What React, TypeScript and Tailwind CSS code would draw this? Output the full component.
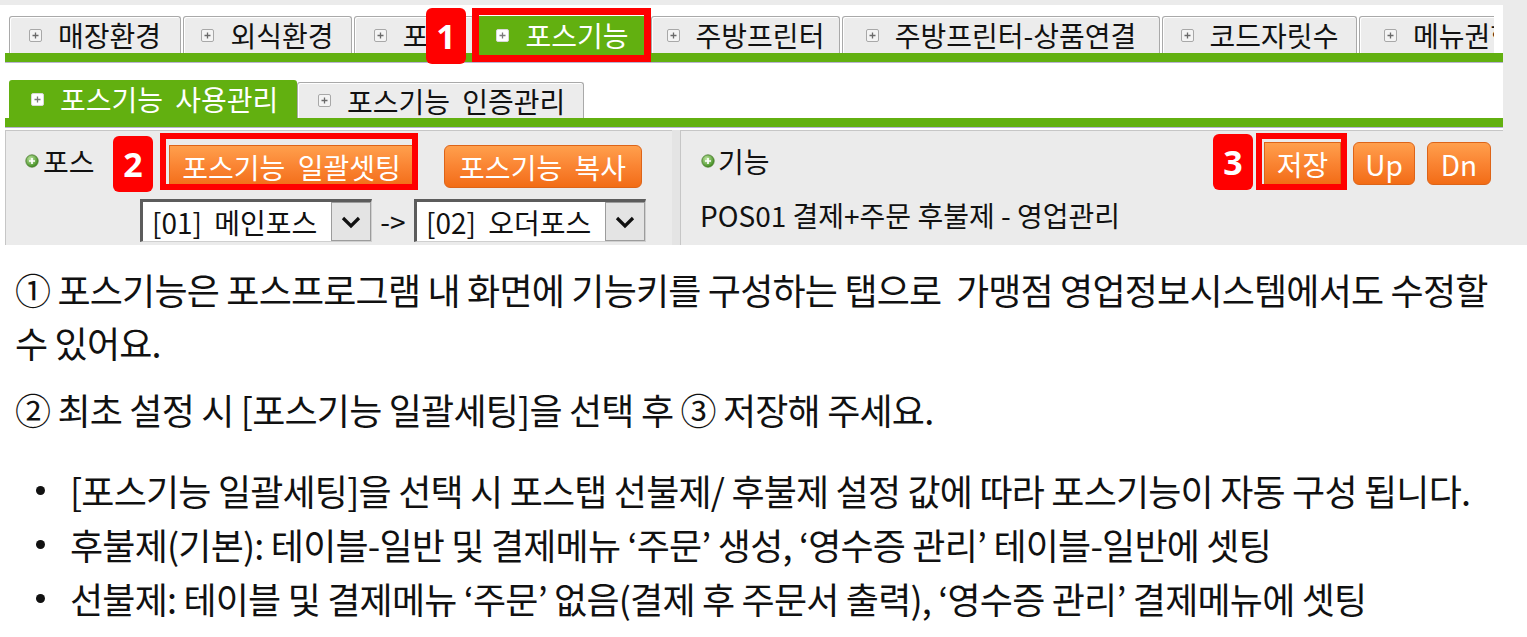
import React from "react";

const plusSquare = (active?: boolean) => (
  <svg width="13" height="13" viewBox="0 0 13 13" className="shrink-0">
    <rect x="0.5" y="0.5" width="12" height="12" rx="1.5" fill={active ? "#ffffff" : "#f4f4f4"} stroke={active ? "#d8d8d8" : "#a8a8a8"} />
    <path d="M6.5 3.5v6M3.5 6.5h6" stroke={active ? "#7a7a7a" : "#6a6a6a"} strokeWidth="1.3" />
  </svg>
);

const greenDot = (
  <svg width="14" height="14" viewBox="0 0 14 14" className="shrink-0">
    <defs>
      <radialGradient id="gd" cx="40%" cy="35%" r="65%">
        <stop offset="0" stopColor="#c4eaa8" />
        <stop offset="1" stopColor="#3d8a1c" />
      </radialGradient>
    </defs>
    <circle cx="7" cy="7" r="6.2" fill="url(#gd)" stroke="#4f7d34" strokeWidth="0.8" />
    <path d="M7 4v6M4 7h6" stroke="#fff" strokeWidth="1.7" />
  </svg>
);

function Tab({ label, w, active, left }: { label: string; w: number; active?: boolean; left?: boolean }) {
  return (
    <div
      style={{ width: w }}
      className={`h-full shrink-0 flex items-center gap-[16px] rounded-t-[3px] border border-b-0 ${left ? "justify-start pl-[24px]" : "justify-center"} ${
        active ? "bg-[#62b010] border-[#62b010] text-white" : "bg-[#ececec] border-[#a9a9a9] text-[#111] shadow-[inset_1px_1px_0_#ffffff]"
      }`}
    >
      {plusSquare(active)}
      <span className="whitespace-nowrap">{label}</span>
    </div>
  );
}

function Badge({ n, cls }: { n: string; cls: string }) {
  return (
    <div className={`absolute w-[40px] h-[56px] bg-[#ff0000] rounded-[6px] flex items-center justify-center text-white text-[34px] font-bold font-['Noto_Sans',sans-serif] ${cls}`}>
      {n}
    </div>
  );
}

function OrangeBtn({ label, w, rounded }: { label: string; w: number; rounded?: boolean }) {
  return (
    <div
      style={{ width: w }}
      className={`h-[43px] shrink-0 flex items-center justify-center text-white whitespace-nowrap bg-linear-to-b from-[#ff9f4c] via-[#fa8432] to-[#f26c14] border border-[#dd6418] ${rounded ? "rounded-[6px]" : ""}`}
    >
      {label}
    </div>
  );
}

function Select({ label }: { label: string }) {
  return (
    <div className="flex h-[43px] w-[232px] bg-white border-t-[3px] border-l-[3px] border-t-[#5c5c5c] border-l-[#5c5c5c] border-r border-b border-r-[#cfcfcf] border-b-[#cfcfcf]">
      <span className="pl-[9px] flex items-center whitespace-nowrap">{label}</span>
      <div className="ml-auto w-[40px] bg-[#e4e4e4] border border-[#9c9c9c] flex items-center justify-center">
        <svg width="22" height="14" viewBox="0 0 22 14">
          <polyline points="3,3 11,11 19,3" fill="none" stroke="#111" strokeWidth="3.2" />
        </svg>
      </div>
    </div>
  );
}

export default function App() {
  return (
    <div className="w-[1527px] h-[637px] bg-white overflow-hidden">
      {/* captured admin screen */}
      <div className="relative h-[245px] bg-[#ebebeb] pt-[5px] pr-[24px] text-[28px] leading-none [word-spacing:6px] font-['Noto_Sans_CJK_KR',sans-serif]">
        <div className="h-full bg-white flex flex-col">
          <div className="h-[11px]" />
          <div className="flex h-[37px] w-[1494px] pl-[9px] gap-[2px] overflow-x-clip">
            <Tab label="매장환경" w={172} />
            <Tab label="외식환경" w={169} />
            <Tab label="포스" w={120} />
            <Tab label="포스기능" w={173} active />
            <Tab label="주방프린터" w={189} />
            <Tab label="주방프린터-상품연결" w={318} />
            <Tab label="코드자릿수" w={195} />
            <Tab label="메뉴권한" w={180} left />
          </div>
          <div className="ml-[5px] h-[10px] bg-[#62b010] border-b border-[#b9b3d3]" />
          <div className="h-[17px]" />
          <div className="flex h-[38px] pl-[9px] items-end">
            <div className="h-[38px] w-[288px] rounded-t-[3px] bg-[#62b010] text-white flex items-center gap-[16px] pl-[22px]">
              {plusSquare(true)}
              <span className="whitespace-nowrap">포스기능 사용관리</span>
            </div>
            <div className="h-[36px] w-[287px] rounded-t-[3px] bg-[#ececec] border border-b-0 border-[#a9a9a9] text-[#111] flex items-center gap-[16px] pl-[20px] shadow-[inset_1px_1px_0_#ffffff]">
              {plusSquare()}
              <span className="whitespace-nowrap">포스기능 인증관리</span>
            </div>
          </div>
          <div className="ml-[5px] h-[10px] bg-[#62b010] border-b border-[#b9b3d3]" />
          <div className="h-[2px]" />
          <div className="flex-1 ml-[5px] bg-[#e4e4e4] flex gap-[8px] text-[#111]">
            <div className="w-[667px] bg-[#ebebeb] border-t border-l border-[#c6c6c6] pt-[14px] flex flex-col">
              <div className="flex items-start">
                <div className="flex items-center gap-[4px] pl-[19px] pt-[2px] leading-[28px]">
                  {greenDot}
                  <span>포스</span>
                </div>
                <div className="ml-[74px] flex gap-[29px]">
                  <OrangeBtn label="포스기능 일괄셋팅" w={246} />
                  <OrangeBtn label="포스기능 복사" w={198} rounded />
                </div>
              </div>
              <div className="flex items-center mt-[11px] pl-[134px]">
                <Select label="[01] 메인포스" />
                <span className="w-[42px] text-center">-&gt;</span>
                <Select label="[02] 오더포스" />
              </div>
            </div>
            <div className="flex-1 bg-[#ebebeb] border-t border-l border-[#c6c6c6] pt-[11px] pr-[12px] flex flex-col">
              <div className="flex items-start justify-between">
                <div className="flex items-center gap-[3px] pl-[20px] pt-[5px] leading-[28px]">
                  {greenDot}
                  <span>기능</span>
                </div>
                <div className="flex gap-[12px]">
                  <OrangeBtn label="저장" w={77} />
                  <OrangeBtn label="Up" w={62} rounded />
                  <OrangeBtn label="Dn" w={64} rounded />
                </div>
              </div>
              <div className="pl-[19px] mt-[16px] whitespace-nowrap [word-spacing:0px]">POS01 결제+주문 후불제 - 영업관리</div>
            </div>
          </div>
        </div>

        {/* highlights */}
        <div className="absolute left-[472px] top-[8px] w-[179px] h-[54px] border-[7px] border-[#ff0000]" />
        <div className="absolute left-[160px] top-[133px] w-[258px] h-[57px] border-[6px] border-[#ff0000]" />
        <div className="absolute left-[1256px] top-[133px] w-[91px] h-[57px] border-[6px] border-[#ff0000]" />
        <Badge n="1" cls="left-[426px] top-[8px] h-[55px]" />
        <Badge n="2" cls="left-[113px] top-[136px]" />
        <Badge n="3" cls="left-[1213px] top-[134px]" />
      </div>

      {/* description */}
      <div className="pl-[15px] pt-[18px] text-[36px] leading-[53px] tracking-[-0.8px] text-[#111] font-['Noto_Sans_CJK_KR',sans-serif]">
        <p className="whitespace-pre">① 포스기능은 포스프로그램 내 화면에 기능키를 구성하는 탭으로  가맹점 영업정보시스템에서도 수정할</p>
        <p className="whitespace-pre">수 있어요.</p>
        <p className="whitespace-pre mt-[14px]">② 최초 설정 시 [포스기능 일괄세팅]을 선택 후 ③ 저장해 주세요.</p>
        <ul className="mt-[27px] leading-[54px]">
          {[
            "[포스기능 일괄세팅]을 선택 시 포스탭 선불제/ 후불제 설정 값에 따라 포스기능이 자동 구성 됩니다.",
            "후불제(기본): 테이블-일반 및 결제메뉴 ‘주문’ 생성, ‘영수증 관리’ 테이블-일반에 셋팅",
            "선불제: 테이블 및 결제메뉴 ‘주문’ 없음(결제 후 주문서 출력), ‘영수증 관리’ 결제메뉴에 셋팅",
          ].map((t) => (
            <li key={t} className="flex items-center">
              <span className="w-[9px] h-[9px] rounded-full bg-[#111] ml-[21px] mr-[25px] shrink-0" />
              <span className="whitespace-pre">{t}</span>
            </li>
          ))}
        </ul>
      </div>
    </div>
  );
}
